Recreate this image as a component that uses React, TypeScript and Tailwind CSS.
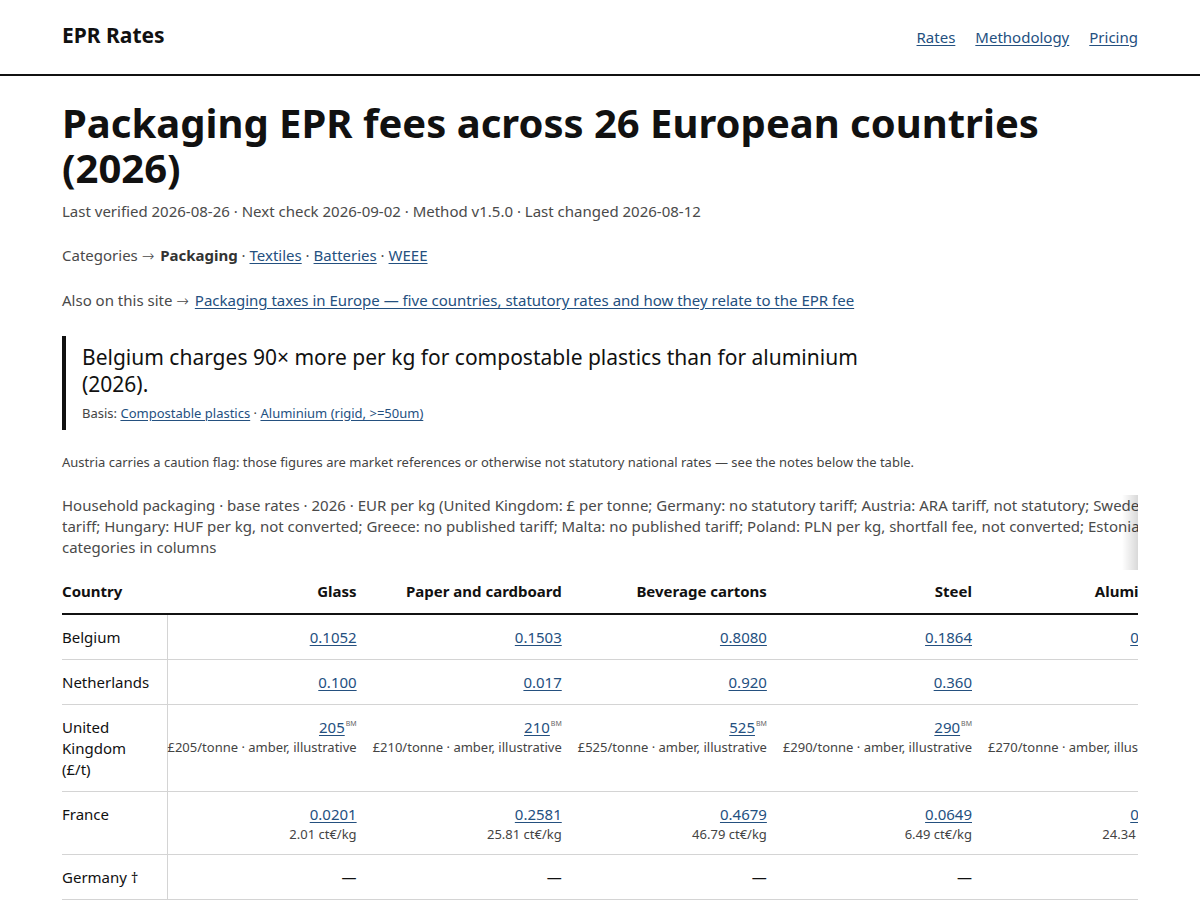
import React from "react";

type Cell = { value?: string; sup?: string; note?: string };

interface Row {
  country: string;
  cells: Cell[];
}

const materials = [
  "Glass",
  "Paper and cardboard",
  "Beverage cartons",
  "Steel",
  "Aluminium",
  "Plastics",
  "Wood",
  "Compostable plastics",
];

const uk = (n: string): Cell => ({
  value: n,
  sup: "BM",
  note: `£${n}/tonne · amber, illustrative`,
});

const rows: Row[] = [
  {
    country: "Belgium",
    cells: [
      { value: "0.1052" },
      { value: "0.1503" },
      { value: "0.8080" },
      { value: "0.1864" },
      { value: "0.0113" },
      { value: "0.9917" },
      { value: "0.0214" },
      { value: "1.0170" },
    ],
  },
  {
    country: "Netherlands",
    cells: [
      { value: "0.100" },
      { value: "0.017" },
      { value: "0.920" },
      { value: "0.360" },
      { value: "0.360" },
      { value: "0.720" },
      { value: "0.025" },
      { value: "0.720" },
    ],
  },
  {
    country: "United Kingdom (£/t)",
    cells: [uk("205"), uk("210"), uk("525"), uk("290"), uk("270"), uk("425"), uk("280"), uk("425")],
  },
  {
    country: "France",
    cells: [
      { value: "0.0201", note: "2.01 ct€/kg" },
      { value: "0.2581", note: "25.81 ct€/kg" },
      { value: "0.4679", note: "46.79 ct€/kg" },
      { value: "0.0649", note: "6.49 ct€/kg" },
      { value: "0.2434", note: "24.34 ct€/kg" },
      { value: "0.6212", note: "62.12 ct€/kg" },
      { value: "0.0320", note: "3.20 ct€/kg" },
      { value: "0.6212", note: "62.12 ct€/kg" },
    ],
  },
  {
    country: "Germany †",
    cells: materials.map(() => ({})),
  },
  {
    country: "Austria †",
    cells: materials.map(() => ({})),
  },
];

const font = "font-['Noto_Sans','Open_Sans',sans-serif]";

// arrow glyph falls back to a wider face, as in the live page
const Arrow = () => <span className="pr-0.5 font-['DejaVu_Sans',sans-serif] font-light">→</span>;

/**
 * One rate cell: linked figure, optional marker, optional note line
 */
function RateCell({ cell }: { cell: Cell }) {
  if (!cell.value) {
    return <span className="text-[#111]">—</span>;
  }
  return (
    <div className="flex flex-col items-end">
      <span>
        <a href="#" className="text-[#24507f] underline underline-offset-2">
          {cell.value}
        </a>
        {cell.sup && (
          <span className="relative -top-[7px] ml-px text-[7px] leading-none text-[#666]">
            {cell.sup}
          </span>
        )}
      </span>
      {cell.note && (
        <span className="text-[13px] leading-[18px] text-[#444]">{cell.note}</span>
      )}
    </div>
  );
}

export default function App() {
  return (
    <div className={`${font} min-h-screen bg-white text-[15px] leading-[21px] text-[#111]`}>
      {/* Site header */}
      <header className="border-b-2 border-[#111]">
        <div className="mx-auto flex max-w-[1124px] items-baseline justify-between px-6 pt-[21px] pb-[25px]">
          <a href="#" className="text-[21px] leading-[28px] font-bold text-[#111]">
            EPR Rates
          </a>
          <nav className="flex gap-5 text-[15px]">
            <a href="#" className="text-[#24507f] underline underline-offset-2">
              Rates
            </a>
            <a href="#" className="text-[#24507f] underline underline-offset-2">
              Methodology
            </a>
            <a href="#" className="text-[#24507f] underline underline-offset-2">
              Pricing
            </a>
          </nav>
        </div>
      </header>

      <main className="mx-auto max-w-[1124px] px-6 pt-6 pb-16">
        {/* Title and meta */}
        <h1 className="text-[40px] leading-[45px] font-bold text-[#111]">
          Packaging EPR fees across 26 European countries (2026)
        </h1>
        <p className="mt-[11px] text-[#4a4a4a]">
          Last verified 2026-08-26 · Next check 2026-09-02 · Method v1.5.0 · Last changed 2026-08-12
        </p>

        <p className="mt-[23px] text-[#4a4a4a]">
          Categories <Arrow /> <strong className="font-bold text-[#333]">Packaging</strong> ·{" "}
          <a href="#" className="text-[#24507f] underline underline-offset-2">Textiles</a> ·{" "}
          <a href="#" className="text-[#24507f] underline underline-offset-2">Batteries</a> ·{" "}
          <a href="#" className="text-[#24507f] underline underline-offset-2">WEEE</a>
        </p>

        <p className="mt-[23px] text-[#4a4a4a]">
          Also on this site <Arrow />{" "}
          <a href="#" className="text-[#24507f] underline underline-offset-2">
            Packaging taxes in Europe — five countries, statutory rates and how they relate to the EPR fee
          </a>
        </p>

        {/* Headline comparison */}
        <blockquote className="mt-6 max-w-[860px] border-l-4 border-[#111] py-2 pl-4">
          <p className="text-[21px] leading-[27px] text-[#111]">
            Belgium charges 90× more per kg for compostable plastics than for aluminium (2026).
          </p>
          <p className="mt-1.5 text-[13px] leading-[18px] text-[#444]">
            Basis:{" "}
            <a href="#" className="text-[#24507f] underline underline-offset-2">Compostable plastics</a> ·{" "}
            <a href="#" className="text-[#24507f] underline underline-offset-2">Aluminium (rigid, &gt;=50um)</a>
          </p>
        </blockquote>

        <p className="mt-[23px] text-[13px] leading-[18px] text-[#444]">
          Austria carries a caution flag: those figures are market references or otherwise not statutory
          national rates — see the notes below the table.
        </p>

        {/* Rates table */}
        <div className="relative mt-6">
          <div className="overflow-x-auto">
            <table className="border-collapse">
              <caption className="pb-3 text-left whitespace-nowrap text-[#4a4a4a]">
                Household packaging · base rates · 2026 · EUR per kg (United Kingdom: £ per tonne; Germany: no
                statutory tariff; Austria: ARA tariff, not statutory; Sweden: no statutory
                <br />
                tariff; Hungary: HUF per kg, not converted; Greece: no published tariff; Malta: no published
                tariff; Poland: PLN per kg, shortfall fee, not converted; Estonia: no published tariff) · material
                <br />
                categories in columns
              </caption>
              <thead>
                <tr className="border-b-2 border-[#111]">
                  <th className="w-[105px] min-w-[105px] py-[11px] pr-4 text-left font-bold">Country</th>
                  {materials.map((m) => (
                    <th
                      key={m}
                      className="w-[205px] min-w-[205px] py-[11px] pr-4 text-right font-bold whitespace-nowrap"
                    >
                      {m}
                    </th>
                  ))}
                </tr>
              </thead>
              <tbody>
                {rows.map((row) => (
                  <tr key={row.country} className="border-b border-[#d4d4d4]">
                    <td className="w-[105px] border-r border-[#d4d4d4] py-[11.5px] pr-4 align-top">
                      {row.country}
                    </td>
                    {row.cells.map((cell, i) => (
                      <td key={i} className="py-[11.5px] pr-4 text-right align-top whitespace-nowrap">
                        <RateCell cell={cell} />
                      </td>
                    ))}
                  </tr>
                ))}
              </tbody>
            </table>
          </div>
          {/* scroll hint */}
          <div className="pointer-events-none absolute top-0 right-0 h-[75px] w-4 bg-linear-to-l from-black/15 to-transparent" />
        </div>
      </main>
    </div>
  );
}
